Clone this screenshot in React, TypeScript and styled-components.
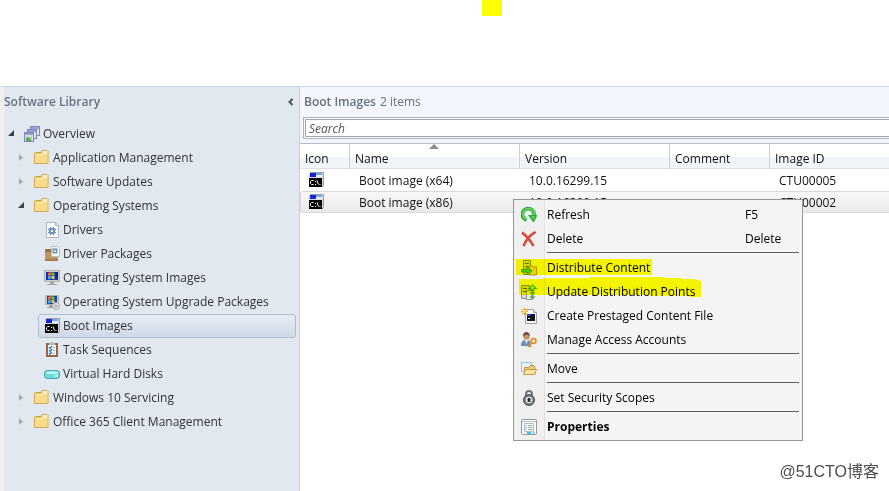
import React from "react";
import styled, { createGlobalStyle, css } from "styled-components";

const Global = createGlobalStyle`
  *, *::before, *::after { box-sizing: border-box; }
  body {
    margin: 0;
    background: #fff;
    color: #1e1e1e;
    font: 12px/16px "Open Sans", "Noto Sans", sans-serif;
  }
  button, input { font: inherit; color: inherit; }
  ul { list-style: none; margin: 0; padding: 0; }
`;

const Page = styled.div`
  position: relative;
  display: flex;
  flex-direction: column;
  min-height: 100vh;
  overflow: hidden;
`;

const TopBand = styled.header`
  position: relative;
  height: 86px;
  flex: none;
`;

const Marker = styled.span`
  position: absolute;
  left: 482px;
  top: 0;
  width: 20px;
  height: 16px;
  background: #ff0;
`;

const Workspace = styled.div`
  flex: 1;
  display: grid;
  grid-template-columns: 300px minmax(0, 1fr);
`;

/* ---------- navigation ---------- */

const Sidebar = styled.nav`
  background: #e1e8f0;
  border-left: 4px solid #f0f0f0;
  border-right: 1px solid #c5d0df;
  border-top: 1px solid #c9d3e0;
`;

const SidebarHead = styled.div`
  display: flex;
  align-items: center;
  justify-content: space-between;
  height: 30px;
  padding-right: 3px;
`;

const PaneTitle = styled.h2`
  margin: 0;
  font-size: 12px;
  line-height: 16px;
  font-weight: 600;
  color: #66727f;
`;

const PlainButton = styled.button`
  display: flex;
  align-items: center;
  justify-content: center;
  padding: 0;
  border: 0;
  background: none;
`;

const CollapseButton = styled(PlainButton)`
  width: 10px;
  height: 16px;
`;

const Tree = styled.ul`
  padding-top: 5px;
`;

const TreeRow = styled.li<{ $level: number }>`
  display: flex;
  align-items: center;
  height: 24px;
  padding-left: ${(p) => [0, 10, 20][p.$level]}px;
  padding-right: 3px;
`;

const Twisty = styled(PlainButton)`
  width: 14px;
  height: 18px;
  padding-bottom: 2px;
  flex: none;
`;

const TwistySpace = styled.span`
  width: 14px;
  flex: none;
`;

const TreeLink = styled.a<{ $selected?: boolean }>`
  display: flex;
  align-items: center;
  gap: 3px;
  height: 24px;
  padding-left: 5px;
  flex: 1;
  color: #303236;
  text-decoration: none;
  white-space: nowrap;
  border: 1px solid transparent;
  border-radius: 3px;
  svg { flex: none; }
  ${(p) =>
    p.$selected &&
    css`
      border-color: #b0bdd0;
      background: linear-gradient(#e6ecf6, #cfd9e7);
    `}
`;

/* ---------- list ---------- */

const Main = styled.main`
  border-top: 1px solid #c9d3e0;
  background: #fff;
  min-width: 0;
`;

const MainTop = styled.div`
  background: #f3f6fc;
  padding: 0 0 4px 3px;
`;

const MainHead = styled.div`
  display: flex;
  align-items: center;
  gap: 4px;
  height: 30px;
  padding-left: 1px;
  color: #66727f;
`;

const SearchFrame = styled.div`
  padding: 1px 0 1px 1px;
  border: 1px solid #a9b2bf;
  border-right: 0;
  background: #fff;
`;

const SearchInput = styled.input`
  display: block;
  width: 100%;
  height: 18px;
  padding: 0 3px;
  border: 1px solid #a0a4ac;
  border-right: 0;
  background: #fff;
  outline: 0;
  &::placeholder { color: #555; font-style: italic; opacity: 1; }
`;

const Grid = styled.table`
  width: 100%;
  table-layout: fixed;
  border-collapse: separate;
  border-spacing: 0;
`;

const Col = styled.col<{ $w?: number }>`
  ${(p) => p.$w && `width: ${p.$w}px;`}
`;

const Th = styled.th`
  position: relative;
  height: 26px;
  padding: 5px 5px 0;
  border-top: 1px solid #b5bdc8;
  border-bottom: 1px solid #dcdfe4;
  border-right: 1px solid #cfcfcf;
  background: linear-gradient(#fff 0 13px, #f1f4f8 13px);
  text-align: left;
  font-weight: 400;
  color: #111;
  &:last-child { border-right: 0; }
`;

const SortMark = styled.svg`
  position: absolute;
  top: 0;
  left: calc(50% - 6px);
`;

const Td = styled.td`
  height: 22px;
  padding: 2px 9px 0;
  color: #111;
  svg { display: block; }
`;

const IconTd = styled(Td)`
  padding-top: 0;
  padding-left: 8px;
`;

const Tr = styled.tr<{ $selected?: boolean }>`
  ${(p) =>
    p.$selected &&
    css`
      ${Td} {
        border-top: 1px solid #d9d9d9;
        border-bottom: 1px solid #d9d9d9;
        background: linear-gradient(#f8f8f8, #e9e9e9);
      }
      ${Td}:first-child {
        border-left: 1px solid #d9d9d9;
        border-radius: 3px 0 0 3px;
        padding-left: 7px;
      }
    `}
`;

/* ---------- context menu ---------- */

const Menu = styled.div`
  position: absolute;
  left: 513px;
  top: 199px;
  width: 290px;
  padding: 3px 0 1px;
  border: 1px solid #979797;
  background: linear-gradient(90deg, #f0f0f0 0 30px, #e2e2e2 30px 31px, #f4f4f4 31px);
`;

const MenuItem = styled.button<{ $strong?: boolean }>`
  display: grid;
  grid-template-columns: 33px 1fr 57px;
  align-items: center;
  width: 100%;
  height: 24px;
  padding: 0;
  border: 0;
  background: none;
  color: #000;
  text-align: left;
  font-weight: ${(p) => (p.$strong ? 700 : 400)};
  svg { margin-left: 7px; }
`;

const Separator = styled.hr`
  height: 1px;
  margin: 1px 3px 3px 33px;
  border: 0;
  background: #5f5f5f;
`;

const Highlights = styled.svg`
  position: absolute;
  left: 0;
  top: 0;
  mix-blend-mode: multiply;
  pointer-events: none;
`;

const Watermark = styled.span`
  position: absolute;
  right: 10px;
  bottom: 9px;
  font: 16px/20px "Liberation Sans", "Noto Sans CJK SC", sans-serif;
  color: #4c4c4c;
  text-shadow: 1px 1px 0 #fff;
`;

/* ---------- icons ---------- */

const Icon = styled.svg.attrs({ width: 16, height: 16, viewBox: "0 0 16 16", "aria-hidden": true })`
  display: block;
`;

const OverviewIcon = () => (
  <Icon>
    {[[6, 0], [3, 3], [0, 6]].map(([x, y]) => (
      <g key={x} transform={`translate(${x} ${y})`}>
        <rect x=".5" y=".5" width="9" height="9" fill="#dfe3f3" stroke="#8086b5" />
        <path d="M1 1h8v2H1z" fill="#9ba0cf" />
      </g>
    ))}
    <path d="M2 10h6v5H2z" fill="#bfe0f3" />
    <path d="M2 15v-3l2-1 4 4z" fill="#4fa84e" />
    <path d="M5 11h3v2H6z" fill="#e4bd4c" />
  </Icon>
);

const FolderIcon = () => (
  <Icon>
    <path d="M.5 13.500V3.500l1-1H7l1-2h5l1 1v12z" fill="#e8bf59" stroke="#cfa750" />
    <path d="M8.500 1h5v2h-5z" fill="#fff4cf" />
    <path d="M1 13V4h6l1-1h5.500v10z" fill="#fbdc87" />
    <path d="M1 4.500h6.200l1-1h5.300" stroke="#fff0bc" fill="none" />
  </Icon>
);

const Gear = ({ x, y, r }: { x: number; y: number; r: number }) => (
  <g stroke="#6f94b5" fill="none">
    <circle cx={x} cy={y} r={r * 0.6} strokeWidth={r * 0.42} />
    <path
      strokeWidth={r * 0.3}
      d={`M${x - r * 0.4} ${y - r}V${y + r}M${x + r * 0.4} ${y - r}V${y + r}M${x - r} ${y - r * 0.4}H${x + r}M${x - r} ${y + r * 0.4}H${x + r}`}
    />
    <circle cx={x} cy={y} r={r * 0.25} fill="#fff" stroke="none" />
  </g>
);

const DriverIcon = () => (
  <Icon>
    <path d="M2.500.5h9l3 3v12h-12z" fill="#fafcfd" stroke="#b0b4b8" />
    <path d="M11.500.5v3h3" fill="#dfe4e8" stroke="#b0b4b8" />
    <Gear x={8} y={9} r={4} />
  </Icon>
);

const PackageIcon = () => (
  <Icon>
    <path d="M1 4h13v11H1z" fill="#bf945f" />
    <path d="M1 4l1-1h6v3H1z" fill="#9c7244" />
    <path d="M1 13h13v2H1z" fill="#a67c4a" />
    <path d="M7.500.5h6l2 2v8h-8z" fill="#f7fafc" stroke="#b9bec3" />
    <Gear x={11} y={5} r={3} />
  </Icon>
);

const Flag = ({ x, y }: { x: number; y: number }) => (
  <g transform={`translate(${x} ${y})`}>
    <path d="M0 1l3-1v3l-3 1z" fill="#ef6a2c" />
    <path d="M3.500 0l3 1v3l-3-1z" fill="#73c043" />
    <path d="M0 4.500l3-1v3l-3 1z" fill="#4aa5ee" />
    <path d="M3.500 3.500l3 1v3l-3-1z" fill="#f8d038" />
  </g>
);

const MonitorIcon = () => (
  <Icon>
    <path d="M.5.5h15v11H.5z" fill="#cfd1cc" stroke="#b0b2ae" />
    <path d="M2 2h12v8H2z" fill="#1230b4" />
    <path d="M11 2h3v8z" fill="#071c7c" />
    <Flag x={4} y={2} />
    <path d="M6 12h4v2h3v1H3v-1h3z" fill="#a3a5a0" />
  </Icon>
);

const UpgradeIcon = () => (
  <Icon>
    <path d="M1.500 1.500h13v9h-13z" fill="#cfd1cc" stroke="#b0b2ae" />
    <path d="M3 2h10v8H3z" fill="#1c3fae" />
    <Flag x={4} y={2} />
    <path d="M5 11h4v2h1v1H3v-1h2z" fill="#a3a5a0" />
    <circle cx="12" cy="12" r="3.500" fill="#dedfe0" stroke="#a5a9ad" />
    <circle cx="12" cy="12" r="1" fill="#fff" stroke="#9b9fa3" />
  </Icon>
);

const BootIcon = () => (
  <Icon>
    <path d="M2 0h14v13l-1 2h-1V2H2z" fill="#9ba0a4" />
    <path d="M1 1h14v13H1z" fill="#d7dadd" />
    <path d="M2 1h6v4H2z" fill="#1725d8" />
    <path d="M8 1h6v2H8z" fill="#76a6f4" />
    <path d="M8 3h6v2H8z" fill="#e6effb" />
    <path d="M1 6h13v9H1z" fill="#000" />
    <path d="M5.500 8.500H3.500l-1 1v2l1 1h2M7.500 9v1M7.500 12v1M9 8.500l1.500 4M12 12v1" stroke="#fff" fill="none" />
  </Icon>
);

const TaskIcon = () => (
  <Icon>
    <path d="M2 1h12v14H2z" fill="#9a6440" />
    <path d="M4 3h8v10H4z" fill="#f3f8fc" />
    <path d="M6 0h4v1h1v2H5V1h1z" fill="#b9bdc2" />
    <path d="M5 5l1 1.500L8 4M5 8l1 1.500L8 7M5 11l1 1 2-2" stroke="#2d7cbf" strokeWidth="1.300" fill="none" />
    <path d="M9 5.500h2M9 8.500h2M9 11.500h2" stroke="#9db4c6" />
  </Icon>
);

const DiskIcon = () => (
  <Icon>
    <rect x="0" y="4" width="16" height="9" rx="4" fill="#3fa9b2" />
    <rect x="1" y="5" width="14" height="7" rx="3" fill="#6fdcdf" />
    <path d="M2 6c1-1 11-1 12 0v2H2z" fill="#b4f3f2" />
    <path d="M11 9h3v2h-3z" fill="#e6ffff" />
  </Icon>
);

const RefreshIcon = () => (
  <Icon>
    <path d="M5.500 13A5.800 5.800 0 1 1 13 8" stroke="#27a035" strokeWidth="3.800" fill="none" />
    <path d="M5 12.300A5.600 5.600 0 1 1 13 8" stroke="#62d95c" strokeWidth="2" fill="none" />
    <path d="M7 8h9v1l-3 6h-1z" fill="#2ba838" />
    <path d="M10 9h4l-1.500 4z" fill="#58d553" />
  </Icon>
);

const DeleteIcon = () => (
  <Icon>
    <path d="M1 1.500c4 3 8 7 11.500 13.500M14.500 1C9 4 5 9 2.500 15" stroke="#cf3326" strokeWidth="2.400" fill="none" />
    <path d="M2 2c4 3 7 6 10 11.500M13 2C9 5 5 9 3 14" stroke="#f0604d" strokeWidth="1" fill="none" />
  </Icon>
);

const DistributeIcon = () => (
  <Icon>
    <path d="M2.500.5h7v14h-7z" fill="#d5d9dc" stroke="#8b9094" />
    <path d="M4 3.500h4M4 6.500h4" stroke="#687078" />
    <path d="M8 6h3l1 1h3.500v8H8z" fill="#ecd07c" stroke="#b3934a" />
    <path d="M.5 9.500H6v-3l5 4.500-5 4v-3H.5z" fill="#55ce35" stroke="#3a9c2d" />
  </Icon>
);

const UpdateIcon = () => (
  <Icon>
    <path d="M.5 1.500h8v13h-8z" fill="#d3d7da" stroke="#8b9094" />
    <path d="M2 4.500h4M2 7.500h4" stroke="#5d656c" />
    <path d="M5.500 6.500h6v9h-6z" fill="#e6e8ea" stroke="#93989c" />
    <path d="M11.500.5l4 4h-2.500v2h-3v-2H7.500zM10 8h3v2h-3zM10 12h3v2h-3z" fill="#8be874" stroke="#3a9c2d" />
  </Icon>
);

const PrestageIcon = () => (
  <Icon>
    <path d="M4.500 1.500h8l3 3v11h-11z" fill="#f8fafc" stroke="#9aa1a8" />
    <path d="M12.500 1.500v3h3" fill="#dde3ea" stroke="#9aa1a8" />
    <path d="M6 6h8v7H6z" fill="#151515" />
    <path d="M6 6h4v2H6z" fill="#2a45d4" />
    <path d="M7 10h2v1H7z" fill="#fff" />
    <path d="M3.500 0v7M0 3.500h7M1 1l5 5M6 1L1 6" stroke="#f0a11c" />
    <circle cx="3.500" cy="3.500" r="1.300" fill="#fff3b0" />
  </Icon>
);

const AccountsIcon = () => (
  <Icon>
    <path d="M0 14c0-5 2-6 5-6s5 1 5 6z" fill="#6a8fb5" />
    <path d="M4 8h3l-1.500 4z" fill="#e8f0f7" />
    <circle cx="5.500" cy="4.500" r="3.300" fill="#c99466" />
    <path d="M2 4.500c-.5-6 7-6 7 0-1-2.500-5-2.500-7 0z" fill="#6b4c38" />
    <circle cx="12.500" cy="9" r="2.500" fill="#fbe0b0" stroke="#dd8a30" strokeWidth="1.500" />
    <path d="M11 11l-4 4M8.500 13.500l1.500 1.500" stroke="#dd8a30" strokeWidth="1.500" />
  </Icon>
);

const MoveIcon = () => (
  <Icon>
    <path d="M.5 1.500h10v9H.5z" fill="#e8f4fd" stroke="#4a92cd" strokeDasharray="1 1" />
    <path d="M3.500 13.500v-7H8l1-2h4l1 2v7z" fill="#edcb79" stroke="#bf9a4d" />
    <path d="M2.500 13.500l2-5h11l-2 5z" fill="#fbe19a" stroke="#bf9a4d" />
  </Icon>
);

const LockIcon = () => (
  <Icon>
    <path d="M5 7V4a3 3 0 0 1 6 0v3" stroke="#6f757a" strokeWidth="2" fill="none" />
    <circle cx="8" cy="10" r="5.500" fill="#74797e" stroke="#4c5156" />
    <circle cx="8" cy="10" r="3.300" fill="#e6e8ea" />
    <circle cx="8" cy="9.200" r="1.500" fill="#2b2f33" />
    <path d="M7 9h2l.5 3h-3z" fill="#2b2f33" />
  </Icon>
);

const PropertiesIcon = () => (
  <Icon>
    <rect x=".5" y=".5" width="15" height="15" rx="1" fill="#f7f9fa" stroke="#92989d" />
    <path d="M1 2.500h14" stroke="#b8c2ca" />
    <path d="M3.500 4.500h9v8h-9z" fill="#fff" stroke="#b4bcc3" />
    <path d="M4.500 6.500h1M4.500 8.500h1M4.500 10.500h1" stroke="#3f8fc9" />
    <path d="M7 6.500h4.500M7 8.500h4.500M7 10.500h4.500" stroke="#9aa2a9" />
    <path d="M6 13h4v2H6z" fill="#35c5ea" />
    <path d="M11 13h3v2h-3z" fill="#c3cbd1" />
  </Icon>
);

const OpenArrow = () => (
  <svg width="7" height="7" viewBox="0 0 7 7" aria-hidden>
    <path d="M6 0v6H0z" fill="#404040" />
  </svg>
);

const ClosedArrow = () => (
  <svg width="6" height="9" viewBox="0 0 6 9" aria-hidden>
    <path d="M1 1v7l4-3.500z" fill="#a6a8ab" />
  </svg>
);

/* ---------- data ---------- */

type Node = { label: string; level: number; icon: React.FC; open?: boolean; selected?: boolean };

const nodes: Node[] = [
  { label: "Overview", level: 0, icon: OverviewIcon, open: true },
  { label: "Application Management", level: 1, icon: FolderIcon, open: false },
  { label: "Software Updates", level: 1, icon: FolderIcon, open: false },
  { label: "Operating Systems", level: 1, icon: FolderIcon, open: true },
  { label: "Drivers", level: 2, icon: DriverIcon },
  { label: "Driver Packages", level: 2, icon: PackageIcon },
  { label: "Operating System Images", level: 2, icon: MonitorIcon },
  { label: "Operating System Upgrade Packages", level: 2, icon: UpgradeIcon },
  { label: "Boot Images", level: 2, icon: BootIcon, selected: true },
  { label: "Task Sequences", level: 2, icon: TaskIcon },
  { label: "Virtual Hard Disks", level: 2, icon: DiskIcon },
  { label: "Windows 10 Servicing", level: 1, icon: FolderIcon, open: false },
  { label: "Office 365 Client Management", level: 1, icon: FolderIcon, open: false },
];

const images = [
  { name: "Boot image (x64)", version: "10.0.16299.15", id: "CTU00005" },
  { name: "Boot image (x86)", version: "10.0.16299.15", id: "CTU00002", selected: true },
];

type Action = { label: string; icon: React.FC; keys?: string; strong?: boolean };

const actionGroups: Action[][] = [
  [
    { label: "Refresh", icon: RefreshIcon, keys: "F5" },
    { label: "Delete", icon: DeleteIcon, keys: "Delete" },
  ],
  [
    { label: "Distribute Content", icon: DistributeIcon },
    { label: "Update Distribution Points", icon: UpdateIcon },
    { label: "Create Prestaged Content File", icon: PrestageIcon },
    { label: "Manage Access Accounts", icon: AccountsIcon },
  ],
  [{ label: "Move", icon: MoveIcon }],
  [{ label: "Set Security Scopes", icon: LockIcon }],
  [{ label: "Properties", icon: PropertiesIcon, strong: true }],
];

export default function App() {
  return (
    <>
      <Global />
      <Page>
        <TopBand>
          <Marker />
        </TopBand>
        <Workspace>
          <Sidebar aria-label="Software Library">
            <SidebarHead>
              <PaneTitle>Software Library</PaneTitle>
              <CollapseButton aria-label="Collapse">
                <svg width="6" height="8" viewBox="0 0 6 8" aria-hidden>
                  <path d="M4.500 1L1.500 4l3 3" stroke="#4c5158" strokeWidth="2" fill="none" />
                </svg>
              </CollapseButton>
            </SidebarHead>
            <Tree>
              {nodes.map(({ label, level, icon: NodeIcon, open, selected }) => (
                <TreeRow key={label} $level={level}>
                  {open === undefined ? (
                    <TwistySpace />
                  ) : (
                    <Twisty aria-label={`Toggle ${label}`} aria-expanded={open}>
                      {open ? <OpenArrow /> : <ClosedArrow />}
                    </Twisty>
                  )}
                  <TreeLink href="#" $selected={selected} aria-current={selected ? "page" : undefined}>
                    <NodeIcon />
                    {label}
                  </TreeLink>
                </TreeRow>
              ))}
            </Tree>
          </Sidebar>
          <Main>
            <MainTop>
              <MainHead>
                <PaneTitle>Boot Images</PaneTitle>
                <span>2 items</span>
              </MainHead>
              <SearchFrame>
                <SearchInput type="text" placeholder="Search" aria-label="Search" />
              </SearchFrame>
            </MainTop>
            <Grid>
              <colgroup>
                <Col $w={50} />
                <Col $w={170} />
                <Col $w={150} />
                <Col $w={100} />
                <Col />
              </colgroup>
              <thead>
                <tr>
                  <Th>Icon</Th>
                  <Th aria-sort="ascending">
                    Name
                    <SortMark width="10" height="5" viewBox="0 0 10 5" aria-hidden>
                      <path d="M0 5l5-5 5 5z" fill="#8c8c8c" />
                    </SortMark>
                  </Th>
                  <Th>Version</Th>
                  <Th>Comment</Th>
                  <Th>Image ID</Th>
                </tr>
              </thead>
              <tbody>
                {images.map((row) => (
                  <Tr key={row.id} $selected={row.selected}>
                    <IconTd><BootIcon /></IconTd>
                    <Td>{row.name}</Td>
                    <Td>{row.version}</Td>
                    <Td />
                    <Td>{row.id}</Td>
                  </Tr>
                ))}
              </tbody>
            </Grid>
          </Main>
        </Workspace>
        <Menu role="menu">
          {actionGroups.map((group, i) => (
            <React.Fragment key={group[0].label}>
              {i > 0 && <Separator />}
              {group.map(({ label, icon: ActionIcon, keys, strong }) => (
                <MenuItem key={label} role="menuitem" $strong={strong}>
                  <ActionIcon />
                  <span>{label}</span>
                  <span>{keys}</span>
                </MenuItem>
              ))}
            </React.Fragment>
          ))}
          <Highlights width="188" height="98" viewBox="0 0 188 98" aria-hidden>
            <path d="M2 59h136v16H2z" fill="#ff0" />
            <path d="M5 79h24v-1h47v-1h74v1h17v1h13l7 2v16h-11v-1h-40v-1H5z" fill="#ff0" />
          </Highlights>
        </Menu>
        <Watermark>@51CTO博客</Watermark>
      </Page>
    </>
  );
}
